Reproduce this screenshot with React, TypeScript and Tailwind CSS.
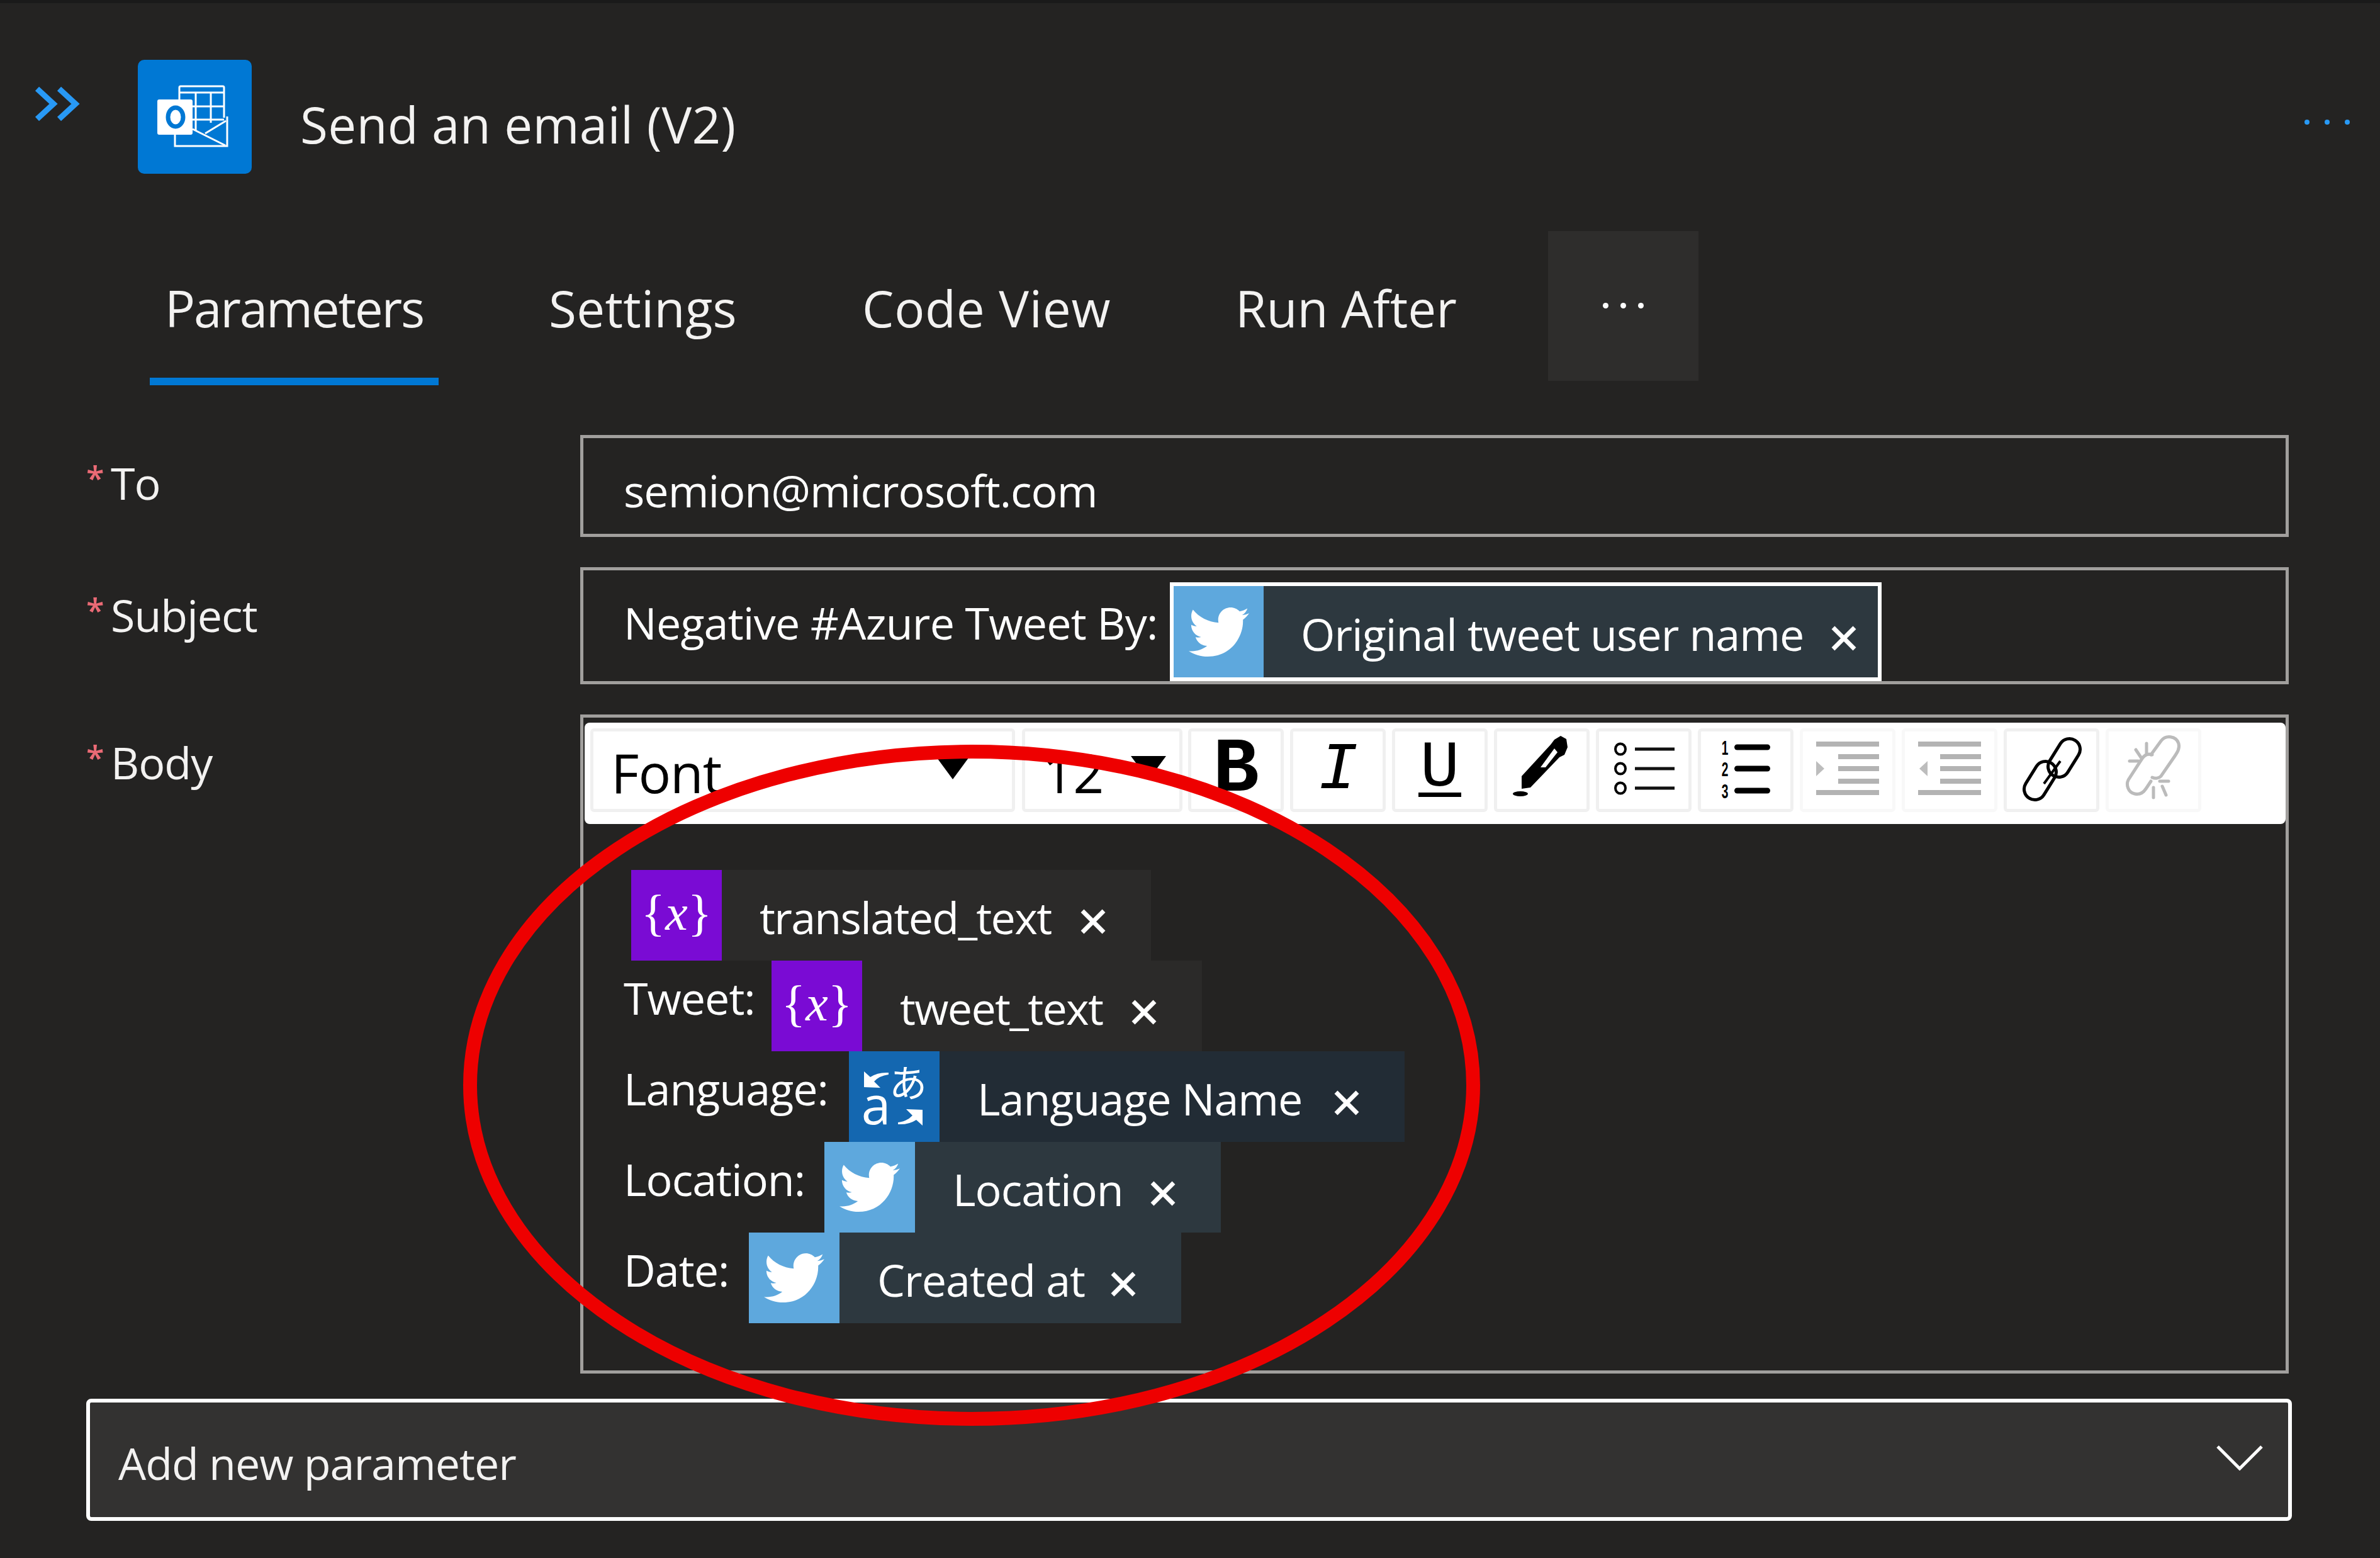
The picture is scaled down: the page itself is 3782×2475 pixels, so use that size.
import { FaTwitter } from 'react-icons/fa';

const Cross = () => (
    <svg viewBox="0 0 42 40" className="w-[42px] h-[40px] mt-[37px] shrink-0">
        <path d="M4 3 L38 37 M38 3 L4 37" stroke="#ffffff" strokeWidth="7" fill="none" />
    </svg>
);

const VarIcon = () => (
    <div className="w-[144px] h-[144px] shrink-0 bg-[#7a0bd4] flex items-center justify-center text-white text-[80px] leading-none font-['Liberation_Serif',serif] pb-[8px]">
        <span>{'{'}</span>
        <span className="italic">x</span>
        <span>{'}'}</span>
    </div>
);

const TwitterIcon = () => (
    <div className="w-[144px] h-[144px] shrink-0 bg-[#5ea8dd] flex items-center justify-center text-white">
        <FaTwitter size={96} />
    </div>
);

const TranslateIcon = () => (
    <div className="w-[144px] h-[144px] shrink-0 bg-[#1467b0]">
        <svg viewBox="0 0 144 144" className="w-full h-full">
            <path d="M24 32 L24 57 L50 58 L40 48 Q48 39 63 37 L63 34 Q46 33 34 41 Z" fill="#ffffff" />
            <path d="M117 118 L117 93 L91 92 L101 102 Q93 111 78 113 L78 116 Q95 117 107 109 Z" fill="#ffffff" />
            <text x="94" y="73" textAnchor="middle" fontSize="60" fill="#ffffff" fontFamily="'Noto Sans CJK JP',sans-serif">あ</text>
            <text x="43" y="116" textAnchor="middle" fontSize="84" fill="#ffffff" fontFamily="'Open Sans',sans-serif">a</text>
        </svg>
    </div>
);

const Chip = ({ icon, label, width, bg, tight }: { icon: React.ReactNode; label: string; width: string; bg: string; tight?: boolean }) => (
    <div className="flex shrink-0">
        {icon}
        <div className={`${width} ${bg} h-[144px] flex justify-between pl-[60px] pr-[71px] text-white text-[70px] leading-[100px] pt-[25px] whitespace-nowrap`}>
            <span className={tight ? 'tracking-[-1.7px]' : 'tracking-[-1px]'}>{label}</span>
            <Cross />
        </div>
    </div>
);

const Label = ({ text }: { text: string }) => (
    <div className="w-[785px] shrink-0 pt-[26px] flex text-[70px] leading-[100px] tracking-[-1px] text-[#f3f2f1]">
        <span className="w-[39px] text-[#ea6a75] text-[52px] font-semibold leading-[84px]">*</span>
        <span>{text}</span>
    </div>
);

const ToolButton = ({ children, off }: { children?: React.ReactNode; off?: boolean }) => (
    <div className={`w-[152px] h-[133px] shrink-0 bg-white rounded-[6px] border-[5px] ${off ? 'border-[#f8f8f8]' : 'border-[#f0f0f0]'} flex items-center justify-center text-black`}>
        {children}
    </div>
);

const iconBox = 'w-[142px] h-[123px]';

const PenIcon = () => (
    <svg viewBox="5 5 142 123" className={iconBox}>
        <path d="M44 76 L90 26 L96 18 L106 12 L115 17 L117 30 L112 42 L104 46 L58 94 L44 96 Z" fill="#000000" />
        <path d="M74 62 L96 32 L101 38 L82 62 Z" fill="#ffffff" />
        <ellipse cx="42" cy="104" rx="12" ry="4" fill="#000000" />
    </svg>
);

const BulletsIcon = () => (
    <svg viewBox="5 5 142 123" className={iconBox}>
        {[33, 64, 95].map(y => (
            <g key={y}>
                <ellipse cx="39" cy={y} rx="8" ry="8.5" fill="none" stroke="#000000" strokeWidth="4" />
                <rect x="62" y={y - 2.5} width="63" height="5" fill="#111111" />
            </g>
        ))}
    </svg>
);

const NumbersIcon = () => (
    <svg viewBox="5 5 142 123" className={iconBox}>
        {[30, 64, 99].map((y, i) => (
            <g key={y}>
                <text x="43" y={y + 12} textAnchor="middle" fontSize="32" fontWeight="700" fill="#000000" fontFamily="'Liberation Sans',sans-serif" transform="translate(43 0) scale(0.6 1) translate(-43 0)">{i + 1}</text>
                <rect x="58" y={y - 4.5} width="57" height="9" rx="4.5" fill="#000000" />
            </g>
        ))}
    </svg>
);

const IndentIcon = ({ flip }: { flip?: boolean }) => (
    <svg viewBox="5 5 142 123" className={iconBox}>
        <rect x="26" y="21" width="100" height="8" fill="#b3b3b3" />
        {[45, 64, 84].map(y => (
            <rect key={y} x="61" y={y - 4} width="65" height="8" fill="#b3b3b3" />
        ))}
        <rect x="26" y="98" width="100" height="8" fill="#b3b3b3" />
        {flip ? <path d="M41 52 L41 76 L28 64 Z" fill="#bdbdbd" /> : <path d="M26 52 L26 76 L39 64 Z" fill="#bdbdbd" />}
    </svg>
);

const LinkIcon = () => (
    <svg viewBox="5 5 142 123" className={iconBox}>
        <rect x="79" y="14" width="34" height="66" rx="17" fill="none" stroke="#000000" strokeWidth="5" transform="rotate(32 96 47)" />
        <rect x="41" y="50" width="34" height="66" rx="17" fill="none" stroke="#000000" strokeWidth="5" transform="rotate(32 58 83)" />
        <path d="M64 88 L90 52" stroke="#000000" strokeWidth="4" />
    </svg>
);

const UnlinkIcon = () => (
    <svg viewBox="5 5 142 123" className={iconBox}>
        <g fill="none" stroke="#bbbbbb" strokeWidth="5" strokeLinecap="round">
            <path d="M72 42 L88 20 C96 10 112 12 116 24 C118 32 114 38 110 44 L88 76 C84 80 78 80 74 78" />
            <path d="M74 42 C68 40 62 42 58 48 L36 82 C32 90 36 102 46 104 C54 106 60 102 64 96 L72 84" />
            <path d="M48 34 L56 46 M65 24 L65 40 M38 52 L52 52 M86 84 L100 84 M76 94 L76 110 M90 92 L96 106" />
        </g>
    </svg>
);

const Toolbar = () => (
    <div className="h-[161px] bg-white rounded-[8px] pl-[9px] pt-[9px] flex">
        <div className="w-[675px] h-[133px] shrink-0 rounded-[6px] border-[5px] border-[#f0f0f0] flex justify-between text-black text-[86px] tracking-[-1px] leading-[130px] pl-[28px] pr-[66px]">
            <span>Font</span>
            <div className="w-0 h-0 mt-[38px] border-x-[28px] border-x-transparent border-t-[38px] border-t-black" />
        </div>
        <div className="w-[255px] h-[133px] shrink-0 ml-[11px] rounded-[6px] border-[5px] border-[#f0f0f0] flex justify-between text-black text-[86px] tracking-[-1px] leading-[130px] pl-[28px] pr-[21px]">
            <span>12</span>
            <div className="w-0 h-0 mt-[39px] border-x-[28px] border-x-transparent border-t-[38px] border-t-black" />
        </div>
        <div className="flex gap-[10px] ml-[9px]">
            <ToolButton>
                <span className="font-['Liberation_Mono',monospace] font-bold text-[122px] leading-none">B</span>
            </ToolButton>
            <ToolButton>
                <span className="font-['Liberation_Mono',monospace] italic text-[106px] leading-none">I</span>
            </ToolButton>
            <ToolButton>
                <span className="font-['Liberation_Mono',monospace] text-[104px] leading-[76px] border-b-[7px] border-black h-[84px] w-[68px] flex justify-center">U</span>
            </ToolButton>
            <ToolButton><PenIcon /></ToolButton>
            <ToolButton><BulletsIcon /></ToolButton>
            <ToolButton><NumbersIcon /></ToolButton>
            <ToolButton off><IndentIcon /></ToolButton>
            <ToolButton off><IndentIcon flip /></ToolButton>
            <ToolButton><LinkIcon /></ToolButton>
            <ToolButton off><UnlinkIcon /></ToolButton>
        </div>
    </div>
);

const Row = ({ text, width, children }: { text: string; width: string; children: React.ReactNode }) => (
    <div className="flex h-[144px]">
        <div className={`${width} shrink-0 pt-[9px] text-white text-[70px] tracking-[-1px] leading-[100px]`}>{text}</div>
        {children}
    </div>
);

const varBg = 'bg-[#2b2a29]';
const twitterBg = 'bg-[#2d383f]';

export default function App() {
    return (
        <div className="relative w-[3782px] h-[2475px] overflow-hidden bg-[#242322] font-['Open_Sans',sans-serif]">
            <div className="h-[5px] bg-[#1a1a1a]" />

            {/* Header */}
            <div className="flex h-[271px] pt-[90px] pl-[52px]">
                <svg viewBox="0 0 78 60" className="w-[78px] h-[60px] mt-[42px] shrink-0">
                    <path d="M7 4 L33 28 L7 52 M42 4 L68 28 L42 52" fill="none" stroke="#2899f5" strokeWidth="9" />
                </svg>
                <div className="w-[181px] h-[181px] ml-[89px] shrink-0 rounded-[10px] bg-[#0078d4]">
                    <svg viewBox="0 0 181 181" className="w-full h-full">
                        <g fill="none" stroke="#ffffff" strokeWidth="3">
                            <path d="M66 63 L66 44 Q66 42 68 42 L135 42 Q137 42 137 44 L137 92" />
                            <path d="M66 52 L137 52 M92 52 L92 112 M116 52 L116 100 M87 74 L137 74 M87 95 L137 95" />
                            <path d="M142 90 L142 137 L59 137 L59 118" />
                            <path d="M87 110 L139 136 M107 117 L140 97" />
                        </g>
                        <rect x="31" y="63" width="56" height="56" rx="3" fill="#ffffff" />
                        <ellipse cx="60" cy="91" rx="12" ry="15" fill="#ffffff" stroke="#0078d4" strokeWidth="7" />
                    </svg>
                </div>
                <div className="ml-[77px] mt-[47px] text-[80px] leading-[110px] tracking-[0.3px] text-[#f3f2f1] whitespace-nowrap">Send an email (V2)</div>
                <div className="ml-auto mr-[48px] mt-[95px] flex gap-[24px]">
                    <div className="w-[8px] h-[8px] rounded-full bg-[#2899f5]" />
                    <div className="w-[8px] h-[8px] rounded-full bg-[#2899f5]" />
                    <div className="w-[8px] h-[8px] rounded-full bg-[#2899f5]" />
                </div>
            </div>

            {/* Tabs */}
            <div className="flex h-[245px] mt-[91px] pl-[238px] text-[80px] leading-[110px] text-[#f3f2f1] whitespace-nowrap">
                <div className="w-[459px] h-[245px] pl-[24px] pt-[67px] border-b-[12px] border-[#0078d4] tracking-[-2.2px]">Parameters</div>
                <div className="w-[348px] ml-[150px] pl-[25px] pt-[67px] tracking-[0.3px]">Settings</div>
                <div className="w-[443px] ml-[150px] pl-[25px] pt-[67px] tracking-[0.8px]">Code View</div>
                <div className="w-[402px] ml-[150px] pl-[25px] pt-[67px]">Run After</div>
                <div className="w-[239px] h-[238px] ml-[120px] bg-[#2e2d2c] flex items-center justify-center gap-[19px] pb-[2px]">
                    <div className="w-[9px] h-[9px] rounded-full bg-white" />
                    <div className="w-[9px] h-[9px] rounded-full bg-white" />
                    <div className="w-[9px] h-[9px] rounded-full bg-white" />
                </div>
            </div>

            {/* Fields */}
            <div className="pl-[137px] pt-[79px]">
                <div className="flex">
                    <Label text="To" />
                    <div className="w-[2715px] h-[162px] border-[5px] border-[#a19f9d] pl-[64px] pt-[33px] text-[70px] tracking-[-1px] leading-[100px] text-white">
                        semion@microsoft.com
                    </div>
                </div>

                <div className="flex mt-[48px]">
                    <Label text="Subject" />
                    <div className="w-[2715px] h-[186px] border-[5px] border-[#a19f9d] pl-[64px] pt-[19px] flex text-[70px] tracking-[-1px] leading-[100px] text-white whitespace-nowrap">
                        <div className="w-[868px] shrink-0 pt-[14px] tracking-[-0.8px]">Negative #Azure Tweet By:</div>
                        <div className="w-[1131px] h-[157px] shrink-0 border-[6px] border-white flex">
                            <div className="w-[143px] shrink-0 bg-[#5ea8dd] flex items-center justify-center">
                                <FaTwitter size={96} />
                            </div>
                            <div className="flex-1 bg-[#2d383f] flex justify-between pl-[59px] pr-[33px] pt-[26px]">
                                <span>Original tweet user name</span>
                                <Cross />
                            </div>
                        </div>
                    </div>
                </div>

                <div className="flex mt-[48px]">
                    <Label text="Body" />
                    <div className="w-[2715px] h-[1047px] border-[5px] border-[#a19f9d] pt-[8px] pl-[2px]">
                        <Toolbar />
                        <div className="pl-[62px] pt-[73px] whitespace-nowrap">
                            <Row text="" width="w-[12px]">
                                <Chip icon={<VarIcon />} label="translated_text" width="w-[682px]" bg={varBg} tight />
                            </Row>
                            <Row text="Tweet:" width="w-[235px]">
                                <Chip icon={<VarIcon />} label="tweet_text" width="w-[540px]" bg={varBg} tight />
                            </Row>
                            <Row text="Language:" width="w-[358px]">
                                <Chip icon={<TranslateIcon />} label="Language Name" width="w-[739px]" bg="bg-[#222c35]" />
                            </Row>
                            <Row text="Location:" width="w-[319px]">
                                <Chip icon={<TwitterIcon />} label="Location" width="w-[486px]" bg={twitterBg} />
                            </Row>
                            <Row text="Date:" width="w-[199px]">
                                <Chip icon={<TwitterIcon />} label="Created at" width="w-[543px]" bg={twitterBg} />
                            </Row>
                        </div>
                    </div>
                </div>

                <div className="w-[3505px] h-[194px] mt-[40px] border-[6px] border-white rounded-[8px] bg-[#333231] flex items-center justify-between pl-[45px] pr-[40px] text-[70px] tracking-[-1px] text-[#f3f2f1]">
                    <span className="pt-[10px]">Add new parameter</span>
                    <svg viewBox="0 0 74 40" className="w-[74px] h-[40px] mb-[6px]">
                        <path d="M2 2 L37 37 L72 2" fill="none" stroke="#ffffff" strokeWidth="5" />
                    </svg>
                </div>
            </div>

            {/* Red annotation circled over the body */}
            <svg viewBox="0 0 3782 2475" className="absolute left-0 top-0 w-[3782px] h-[2475px] pointer-events-none">
                <ellipse cx="1544" cy="1724" rx="797" ry="530" fill="none" stroke="#ee0000" strokeWidth="22" />
            </svg>
        </div>
    );
}
